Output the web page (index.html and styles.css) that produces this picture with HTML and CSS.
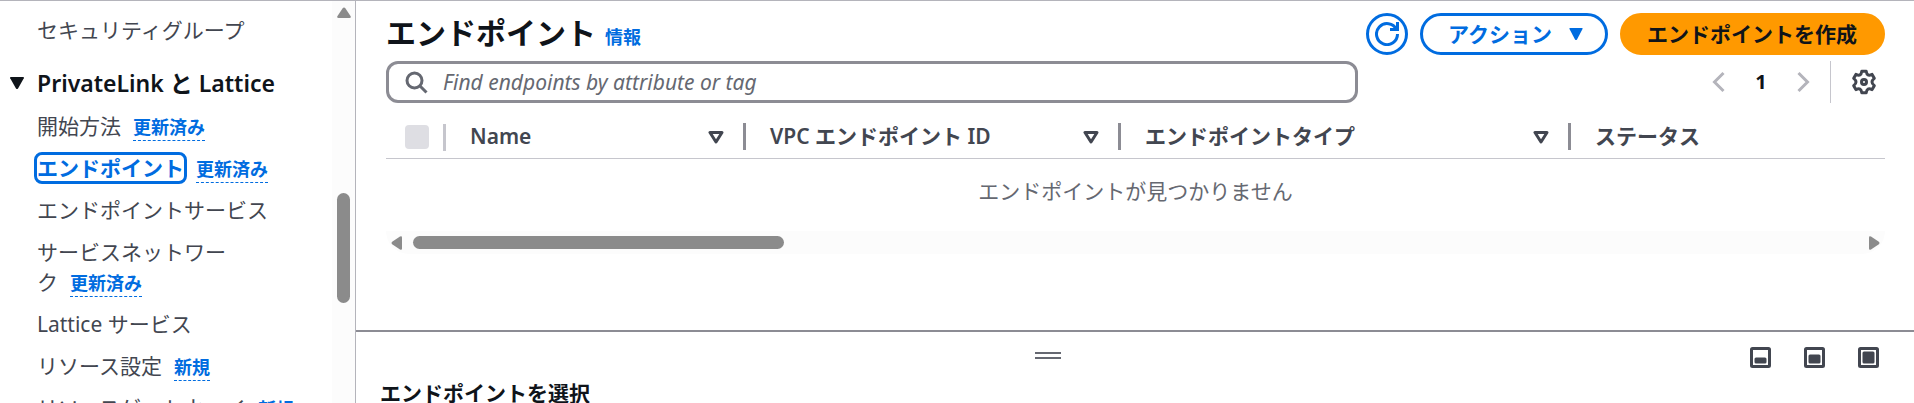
FILE: index.html
```
<!DOCTYPE html>
<html lang="ja">
<head>
    <meta charset="UTF-8">
    <meta name="viewport" content="width=device-width, initial-scale=1.0">
    <title>エンドポイント</title>
    <link rel="stylesheet" href="styles.css">
</head>
<body>
    <aside class="sidebar">
        <nav class="nav">
            <ul class="nav-list">
                <li><a href="#">セキュリティグループ</a></li>
            </ul>
            <button class="nav-heading" type="button" aria-expanded="true">
                <svg class="nav-caret" viewBox="0 0 16 14" aria-hidden="true"><path d="M2 1h12q1.500 0 .8 1.300L9 12.500q-1 1.200-2 0L1.200 2.300Q.5 1 2 1z"/></svg>
                PrivateLink と Lattice
            </button>
            <ul class="nav-list">
                <li><a href="#">開始方法</a><a class="badge" href="#">更新済み</a></li>
                <li><a class="current" href="#">エンドポイント</a><a class="badge" href="#">更新済み</a></li>
                <li><a href="#">エンドポイントサービス</a></li>
                <li><a href="#">サービスネットワー<br>ク</a><a class="badge" href="#">更新済み</a></li>
                <li><a href="#">Lattice サービス</a></li>
                <li><a href="#">リソース設定</a><a class="badge" href="#">新規</a></li>
                <li><a href="#">リソースゲートウェイ</a><a class="badge" href="#">新規</a></li>
            </ul>
        </nav>
        <div class="scroll-y">
            <svg class="scroll-up" viewBox="0 0 14 12" aria-hidden="true"><path d="M5.500 1.500q1.500-2 3 0l5 7.500q1 2-1 2h-11q-2 0-1-2z"/></svg>
            <div class="scroll-y-thumb"></div>
        </div>
    </aside>

    <main class="main">
        <section class="content">
            <header class="title-bar">
                <h1>エンドポイント</h1>
                <a class="info" href="#">情報</a>
                <div class="actions">
                    <button class="btn btn-icon" type="button" aria-label="更新">
                        <svg viewBox="0 0 16 16" aria-hidden="true"><path d="M10 5h5V0"/><path d="M15 8a7 7 0 1 1-.7-3"/></svg>
                    </button>
                    <button class="btn" type="button">
                        アクション
                        <svg class="btn-caret" viewBox="0 0 14 14" aria-hidden="true"><path d="M1 1h12q1 0 .5 1L8 12.500q-1 1-2 0L.5 2Q0 1 1 1z"/></svg>
                    </button>
                    <button class="btn btn-primary" type="button">エンドポイントを作成</button>
                </div>
            </header>

            <div class="tools">
                <label class="search">
                    <svg viewBox="0 0 16 16" aria-hidden="true"><circle cx="7" cy="7" r="5"/><path d="m15 15-4.500-4.500"/></svg>
                    <input type="text" placeholder="Find endpoints by attribute or tag" aria-label="Find endpoints">
                </label>
                <div class="pager">
                    <button type="button" aria-label="前へ"><svg viewBox="0 0 16 16" aria-hidden="true"><path d="M11 2 5 8l6 6"/></svg></button>
                    <span class="page">1</span>
                    <button type="button" aria-label="次へ"><svg viewBox="0 0 16 16" aria-hidden="true"><path d="m5 2 6 6-6 6"/></svg></button>
                </div>
                <button class="settings" type="button" aria-label="設定">
                    <svg viewBox="0 0 24 24" aria-hidden="true"><circle cx="12" cy="12" r="2.500"/><path d="M9.800 1.200h4.400q.5 3 1.800 3.700t4.100-.5l2.200 3.900q-2.300 1.900-2.300 3.700t2.300 3.700l-2.200 3.900q-2.800-1.200-4.100-.5t-1.800 3.700H9.800q-.5-3-1.800-3.700t-4.100.5l-2.200-3.900Q4 13.800 4 12T1.700 8.300l2.200-3.900q2.800 1.200 4.100.5t1.800-3.700z"/></svg>
                </button>
            </div>

            <table>
                <thead>
                    <tr>
                        <th class="col-check"><input type="checkbox" aria-label="すべて選択" disabled></th>
                        <th class="col-name"><div>Name <svg viewBox="0 0 16 14" aria-hidden="true"><path d="M2 2.500h12L8 12z"/></svg></div></th>
                        <th class="col-id"><div>VPC エンドポイント ID <svg viewBox="0 0 16 14" aria-hidden="true"><path d="M2 2.500h12L8 12z"/></svg></div></th>
                        <th class="col-type"><div>エンドポイントタイプ <svg viewBox="0 0 16 14" aria-hidden="true"><path d="M2 2.500h12L8 12z"/></svg></div></th>
                        <th class="col-status"><div>ステータス</div></th>
                    </tr>
                </thead>
                <tbody>
                    <tr><td colspan="5">エンドポイントが見つかりません</td></tr>
                </tbody>
            </table>
            <div class="scroll-x">
                <svg viewBox="0 0 12 14" aria-hidden="true"><path d="M1.500 5.500q-2 1.500 0 3l7.500 5q2 1 2-1v-11q0-2-2-1z"/></svg>
                <div class="scroll-x-rail"><div class="scroll-x-thumb"></div></div>
                <svg viewBox="0 0 12 14" aria-hidden="true"><path d="M10.500 5.500q2 1.500 0 3l-7.500 5q-2 1-2-1v-11q0-2 2-1z"/></svg>
            </div>
        </section>

        <section class="panel">
            <div class="panel-bar">
                <div class="handle"></div>
                <div class="panel-sizes">
                    <button type="button" aria-label="小"><svg viewBox="0 0 21 21" aria-hidden="true"><rect class="frame" x="1.500" y="1.500" width="18" height="18" rx="1"/><rect x="4.500" y="10.500" width="12" height="6" rx="1.500"/></svg></button>
                    <button type="button" aria-label="中"><svg viewBox="0 0 21 21" aria-hidden="true"><rect class="frame" x="1.500" y="1.500" width="18" height="18" rx="1"/><rect x="4.500" y="7.500" width="12" height="9" rx="1.500"/></svg></button>
                    <button type="button" aria-label="大"><svg viewBox="0 0 21 21" aria-hidden="true"><rect class="frame" x="1.500" y="1.500" width="18" height="18" rx="1"/><rect x="4.500" y="4.500" width="12" height="12" rx="1.500"/></svg></button>
                </div>
            </div>
            <h2>エンドポイントを選択</h2>
        </section>
    </main>
</body>
</html>
```

FILE: styles.css
```
* {
    box-sizing: border-box;
}
body {
    display: flex;
    height: 100vh;
    margin: 0;
    overflow: hidden;
    border-top: 1px solid #b4b4bb;
    background: #fff;
    color: #0f141a;
    font-family: "Noto Sans", "Noto Sans CJK JP", sans-serif;
    font-size: 21px;
    line-height: 30px;
}
button, input {
    font: inherit;
    color: inherit;
}
button {
    padding: 0;
    border: none;
    background: none;
    cursor: pointer;
}
a {
    color: inherit;
    text-decoration: none;
}
svg {
    display: block;
    flex: none;
    fill: none;
    stroke: currentColor;
    stroke-width: 2;
}

/* sidebar */
.sidebar {
    display: flex;
    flex: none;
    width: 356px;
    overflow: hidden;
    border-right: 1px solid #b4b4bb;
}
.nav {
    flex: 1;
    padding: 8px 0 0 9px;
}
.nav-list {
    margin: 0;
    padding: 0 0 0 28px;
    list-style: none;
    color: #424650;
}
.nav-list li {
    padding: 6px 0;
    white-space: nowrap;
}
.nav-heading {
    display: flex;
    align-items: center;
    gap: 12px;
    margin: 17px 0 7px;
    font-size: 23px;
    font-weight: 600;
}
.nav-caret {
    width: 16px;
    height: 14px;
    fill: currentColor;
    stroke: none;
}
.badge {
    margin-left: 12px;
    padding-bottom: 1px;
    border-bottom: 1px dashed #006ce0;
    color: #006ce0;
    font-size: 18px;
    font-weight: bold;
    line-height: 18px;
}
.current {
    display: inline-block;
    border-radius: 5px;
    outline: 3px solid #006ce0;
    color: #006ce0;
    font-weight: bold;
    line-height: 26px;
}
.scroll-y {
    width: 23px;
    padding: 6px 5px 0;
    background: #fcfcfc;
    color: #8b8b8b;
}
.scroll-up {
    width: 14px;
    height: 12px;
    fill: currentColor;
    stroke: none;
}
.scroll-y-thumb {
    width: 13px;
    height: 110px;
    margin-top: 174px;
    border-radius: 7px;
    background: #8b8b8b;
}

/* table area */
.main {
    flex: 1;
    min-width: 0;
}
.content {
    padding: 12px 29px 76px 30px;
}
.title-bar {
    display: flex;
    align-items: center;
    height: 42px;
}
h1 {
    margin: 0 9px 2px 0;
    font-size: 30px;
    line-height: 36px;
}
.info {
    padding-top: 6px;
    color: #006ce0;
    font-size: 18px;
    font-weight: bold;
}
.actions {
    display: flex;
    gap: 12px;
    margin-left: auto;
}
.btn {
    display: flex;
    align-items: center;
    gap: 17px;
    height: 42px;
    padding: 0 22px 0 25px;
    border: 3px solid #006ce0;
    border-radius: 21px;
    color: #006ce0;
    font-weight: bold;
}
.btn-icon {
    justify-content: center;
    width: 42px;
    padding: 0;
}
.btn-icon svg {
    width: 24px;
    height: 24px;
}
.btn-caret {
    width: 14px;
    height: 14px;
    fill: currentColor;
    stroke: none;
}
.btn-primary {
    padding: 0 25px 0 24px;
    border-color: #ff9900;
    background: #ff9900;
    color: #0f141a;
}
.tools {
    display: flex;
    align-items: center;
    height: 42px;
    margin-top: 6px;
}
.search {
    display: flex;
    flex: 0 1 972px;
    align-items: center;
    gap: 15px;
    height: 42px;
    padding: 0 15px;
    border: 3px solid #8c8c94;
    border-radius: 12px;
    color: #656871;
}
.search svg {
    width: 24px;
    height: 24px;
}
.search input {
    flex: 1;
    min-width: 0;
    padding: 0;
    border: none;
    outline: none;
    background: none;
}
.search input::placeholder {
    color: #656871;
    font-style: italic;
    opacity: 1;
}
.pager {
    display: flex;
    align-items: center;
    gap: 24px;
    height: 42px;
    margin-left: auto;
    padding-right: 15px;
    border-right: 1px solid #c6c6cd;
}
.pager button {
    color: #b4b4bb;
}
.pager svg {
    width: 24px;
    height: 24px;
}
.page {
    width: 12px;
    font-size: 20px;
    font-weight: bold;
    text-align: center;
}
.settings {
    margin: 0 9px 0 21px;
    color: #424650;
}
.settings svg {
    width: 24px;
    height: 24px;
    overflow: visible;
    stroke-linejoin: round;
    stroke-width: 3;
}
table {
    width: 100%;
    border-collapse: collapse;
    table-layout: fixed;
}
th {
    height: 55px;
    padding: 15px 0 2px;
    border-bottom: 1px solid #c6c6cd;
    color: #424650;
    font-weight: 600;
    text-align: left;
}
th div {
    display: flex;
    align-items: center;
    justify-content: space-between;
    height: 27px;
    padding: 0 19px 0 24px;
    border-right: 3px solid #8c8c94;
    line-height: 27px;
    white-space: nowrap;
}
th svg {
    width: 16px;
    height: 14px;
    stroke-linejoin: round;
    stroke-width: 3;
}
.col-check {
    width: 60px;
    background: linear-gradient(#c6c6cd, #c6c6cd) no-repeat right 21px / 3px 27px;
}
.col-name {
    width: 300px;
}
.col-id {
    width: 375px;
}
.col-type {
    width: 450px;
}
.col-check input {
    display: block;
    width: 24px;
    height: 24px;
    margin: 0 0 0 19px;
    border-radius: 4px;
    background: #dedee3;
    appearance: none;
}
.col-status div {
    border-right: none;
}
td {
    height: 73px;
    padding: 0 0 8px;
    color: #656871;
    text-align: center;
}
.scroll-x {
    display: flex;
    align-items: center;
    gap: 10px;
    height: 23px;
    padding: 0 5px;
    border-radius: 0 0 24px 24px;
    background: #fcfcfc;
    color: #8b8b8b;
}
.scroll-x svg {
    width: 12px;
    height: 14px;
    fill: currentColor;
    stroke: none;
}
.scroll-x-rail {
    flex: 1;
}
.scroll-x-thumb {
    width: 371px;
    height: 13px;
    border-radius: 7px;
    background: #8b8b8b;
}

/* split panel */
.panel {
    border-top: 2px solid #8c8c94;
    padding: 15px 35px 0 24px;
}
.panel-bar {
    display: grid;
    grid-template-columns: 1fr auto;
    gap: 35px;
    align-items: start;
}
.handle {
    width: 26px;
    height: 7px;
    margin-top: 5px;
    justify-self: center;
    border: solid #656871;
    border-width: 2px 0;
}
.panel-sizes {
    display: flex;
    justify-content: flex-end;
    gap: 33px;
    color: #424650;
}
.panel-sizes svg {
    width: 21px;
    height: 21px;
    fill: currentColor;
    stroke: none;
}
.panel-sizes .frame {
    fill: none;
    stroke: currentColor;
    stroke-width: 3;
}
h2 {
    margin: 10px 0 0;
    font-size: 21px;
    line-height: 30px;
}
```
